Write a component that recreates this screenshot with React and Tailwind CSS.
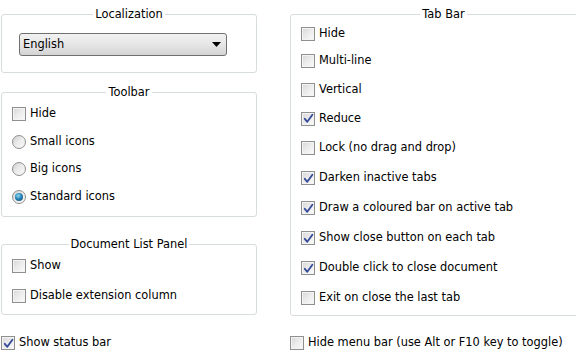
import React from "react";

const tabBarItems = [
  { label: "Hide", checked: false, h: "h-[27px]" },
  { label: "Multi-line", checked: false, h: "h-[28px]" },
  { label: "Vertical", checked: false, h: "h-[29px]" },
  { label: "Reduce", checked: true, h: "h-[29px]" },
  { label: "Lock (no drag and drop)", checked: false, h: "h-[30px]" },
  { label: "Darken inactive tabs", checked: true, h: "h-[30px]" },
  { label: "Draw a coloured bar on active tab", checked: true, h: "h-[30px]" },
  { label: "Show close button on each tab", checked: true, h: "h-[30px]" },
  { label: "Double click to close document", checked: true, h: "h-[30px]" },
  { label: "Exit on close the last tab", checked: false, h: "h-[30px]" },
];

function CheckBox({ checked }) {
  return (
    <span className="flex h-[14px] w-[14px] shrink-0 items-center justify-center border border-[#8e8f8f] bg-gradient-to-br from-[#d6d6d6] via-[#ececec] to-[#fbfbfb] shadow-[inset_0_0_0_1px_#f4f4f4]">
      {checked && (
        <svg width="11" height="11" viewBox="0 0 11 11">
          <path
            d="M1.8 5.8 L4.3 8.8 L9.4 1.8"
            fill="none"
            stroke="#3a4f9a"
            strokeWidth="1.9"
            strokeLinecap="round"
            strokeLinejoin="round"
          />
        </svg>
      )}
    </span>
  );
}

function Radio({ checked }) {
  return (
    <span className="flex h-[14px] w-[14px] shrink-0 items-center justify-center rounded-full border border-[#8e8f8f] bg-gradient-to-br from-[#d0d0d0] via-[#ececec] to-[#fafafa]">
      {checked && (
        <span className="h-[8px] w-[8px] rounded-full bg-[radial-gradient(circle_at_40%_35%,#8fdcf5_0%,#2a86b8_45%,#0f3f66_100%)]" />
      )}
    </span>
  );
}

function CheckRow({ label, checked, h = "h-[28px]", radio = false }) {
  return (
    <div className={`flex items-center gap-[4px] ${h}`}>
      {radio ? <Radio checked={checked} /> : <CheckBox checked={checked} />}
      <span className="leading-none">{label}</span>
    </div>
  );
}

function Group({ title, className, children }) {
  return (
    <fieldset className={`rounded-[3px] border border-[#d7dcdf] ${className}`}>
      <legend className="mx-auto px-[2px] leading-[16px]">{title}</legend>
      {children}
    </fieldset>
  );
}

export default function App() {
  return (
    <div className="flex h-[356px] w-[576px] overflow-hidden bg-white pl-px font-['DejaVu_Sans',sans-serif] text-[11.4px] text-black">
      {/* left column */}
      <div className="flex w-[256px] shrink-0 flex-col">
        <Group title="Localization" className="mt-[6px] px-[17px] pb-[16px]">
          <div className="mt-[11px] flex h-[23px] w-[208px] items-center justify-between rounded-[3px] border border-[#707070] bg-gradient-to-b from-[#f2f2f2] via-[#e6e6e6] to-[#d4d4d4] pl-[3px] pr-[5px]">
            <span>English</span>
            <svg width="9" height="5" viewBox="0 0 9 5">
              <path d="M0 0 H9 L4.5 5 Z" fill="#000" />
            </svg>
          </div>
        </Group>

        <Group title="Toolbar" className="mt-[11px] px-[10px] pb-[5px]">
          <div className="flex flex-col">
            <CheckRow label="Hide" checked={false} h="h-[28px]" />
            <CheckRow label="Small icons" radio checked={false} h="h-[27px]" />
            <CheckRow label="Big icons" radio checked={false} h="h-[28px]" />
            <CheckRow label="Standard icons" radio checked={true} h="h-[28px]" />
          </div>
        </Group>

        <Group title="Document List Panel" className="mt-[19px] px-[10px] pb-[3px]">
          <div className="-mt-px flex flex-col">
            <CheckRow label="Show" checked={false} h="h-[30px]" />
            <CheckRow label="Disable extension column" checked={false} h="h-[30px]" />
          </div>
        </Group>

        <div className="mt-[13px]">
          <CheckRow label="Show status bar" checked={true} h="h-[30px]" />
        </div>
      </div>

      {/* right column */}
      <div className="ml-[33px] flex w-[307px] shrink-0 flex-col">
        <Group title="Tab Bar" className="mt-[6px] px-[10px] pb-[2px]">
          <div className="-mt-[2px] flex flex-col">
            {tabBarItems.map((item) => (
              <CheckRow key={item.label} label={item.label} checked={item.checked} h={item.h} />
            ))}
          </div>
        </Group>

        <div className="mt-[12px]">
          <CheckRow label="Hide menu bar (use Alt or F10 key to toggle)" checked={false} h="h-[30px]" />
        </div>
      </div>
    </div>
  );
}
